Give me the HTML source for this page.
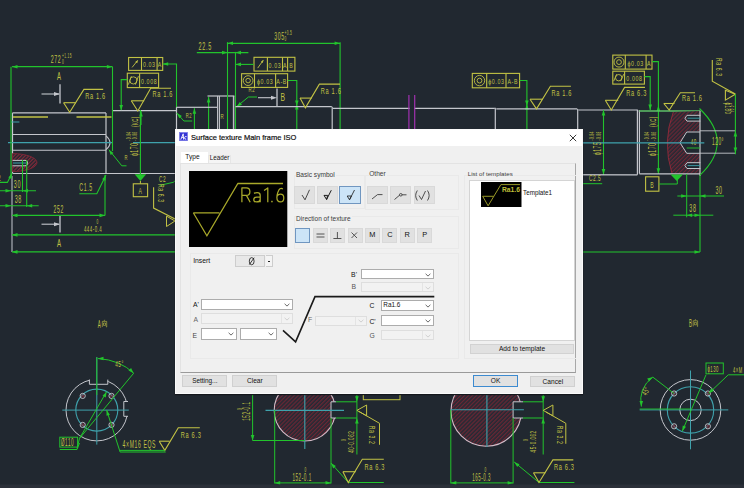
<!DOCTYPE html>
<html><head><meta charset="utf-8">
<style>
*{box-sizing:border-box}
html,body{margin:0;padding:0}
body{width:744px;height:488px;overflow:hidden;background:#212830;position:relative;font-family:"Liberation Sans",sans-serif}
#cad{position:absolute;left:0;top:0}
#cad text{font-family:"Liberation Sans",sans-serif;letter-spacing:0.12em}
.a{position:absolute}
.t{color:#111;white-space:nowrap}
</style></head><body>
<svg id="cad" width="744" height="488" viewBox="0 0 744 488">
<defs><pattern id="hatch2" patternUnits="userSpaceOnUse" width="2.6" height="3" patternTransform="rotate(45)"><rect width="2.6" height="3" fill="#212830"/><line x1="0.6" y1="0" x2="0.6" y2="3" stroke="#8c2a3c" stroke-width="1.1"/></pattern><pattern id="hatch" patternUnits="userSpaceOnUse" width="2.8" height="4" patternTransform="rotate(45)"><rect width="2.8" height="4" fill="#262a34"/><line x1="0.6" y1="0" x2="0.6" y2="4" stroke="#6c2634" stroke-width="1.2"/></pattern></defs>
<path d="M12.5 112.9 L106.0 112.9" stroke="#c4c6cc" stroke-width="1.2" fill="none" />
<path d="M12.5 112.9 L12.5 173.3" stroke="#c4c6cc" stroke-width="1.2" fill="none" />
<path d="M12.5 173.5 L176.5 173.5" stroke="#c4c6cc" stroke-width="1.2" fill="none" />
<path d="M106.0 112.9 L106.0 173.3" stroke="#c4c6cc" stroke-width="1.2" fill="none" />
<path d="M112.4 110.6 L176.5 110.6" stroke="#c4c6cc" stroke-width="1.2" fill="none" />
<path d="M12.5 134.5 L106.0 134.5" stroke="#c4c6cc" stroke-width="1.1" fill="none" />
<path d="M12.5 150.2 L106.0 150.2" stroke="#c4c6cc" stroke-width="1.1" fill="none" />
<path d="M106 135.8 Q114 142.7 106 149.6" stroke="#c4c6cc" stroke-width="1.1" fill="none"/>
<path d="M12.9 117.0 L48.0 117.0" stroke="#c2c244" stroke-width="1.3" fill="none" />
<path d="M76.5 117.0 L111.5 117.0" stroke="#c2c244" stroke-width="1.3" fill="none" />
<path d="M8.0 142.6 L113.0 142.6" stroke="#3fa2ac" stroke-width="1.3" fill="none" />
<path d="M133.0 142.6 L176.0 142.6" stroke="#3fa2ac" stroke-width="1.3" fill="none" />
<path d="M11.0 122.0 L19.4 122.0" stroke="#3fa2ac" stroke-width="1.0" fill="none" />
<path d="M12.5 153.6 A24.5 9 0 0 1 12.5 171.6 Z" stroke="#7a2636" stroke-width="1" fill="url(#hatch2)"/>
<path d="M12.5 160.4 L25 160.4 A2.7 2.7 0 0 1 25 165.8 L12.5 165.8" stroke="#c4c6cc" stroke-width="1" fill="#212830"/>
<path d="M13.0 163.0 L26.0 163.0" stroke="#3fa2ac" stroke-width="1.0" fill="none" />
<path d="M11.0 66.7 L11.0 176.0" stroke="#22c42c" stroke-width="1.1" fill="none" />
<path d="M12.0 176.0 L12.0 252.0" stroke="#b8bcc4" stroke-width="1.1" fill="none" />
<path d="M22.5 160.0 L22.5 192.0" stroke="#22c42c" stroke-width="1.1" fill="none" />
<path d="M26.7 160.0 L26.7 207.0" stroke="#22c42c" stroke-width="1.1" fill="none" />
<path d="M112.5 66.7 L112.5 151.0" stroke="#22c42c" stroke-width="1.1" fill="none" />
<path d="M12.0 66.7 L112.4 66.7" stroke="#22c42c" stroke-width="1.2" fill="none" />
<path d="M12.0 66.7 L17.5 64.9 L17.5 68.5Z" fill="#22c42c"/>
<path d="M112.4 66.7 L106.9 68.5 L106.9 64.9Z" fill="#22c42c"/>
<text transform="translate(50.7 63.0) scale(0.4705357142857142 1)" font-size="11.200000000000001" fill="#c2c244" text-anchor="start" >272</text>
<text transform="translate(62.0 57.5) scale(0.4705357142857142 1)" font-size="6.720000000000001" fill="#c2c244" text-anchor="start" >+1.15</text>
<text transform="translate(62.0 64.0) scale(0.4705357142857142 1)" font-size="6.720000000000001" fill="#c2c244" text-anchor="start" >0</text>
<text transform="translate(56.9 79.6) scale(0.5312499999999999 1)" font-size="11.200000000000001" fill="#c2c244" text-anchor="start" >A</text>
<path d="M41.5 94.0 L59.0 94.0" stroke="#c4c6cc" stroke-width="1.1" fill="none" />
<path d="M60.0 94.0 L54.0 96.0 L54.0 92.0Z" fill="#c4c6cc"/>
<path d="M60.0 84.2 L60.0 103.6" stroke="#c4c6cc" stroke-width="1.3" fill="none" />
<path d="M63.6 102.7 L75.6 102.7" stroke="#c2c244" stroke-width="1.1" fill="none" />
<path d="M63.6 102.7 L69.7 112.3 L83.9 89.4 L103.2 89.4" stroke="#c2c244" stroke-width="1.1" fill="none" />
<text transform="translate(85.2 99.4) scale(0.6450892857142856 1)" font-size="8.736" fill="#c2c244" text-anchor="start" >Ra 1.6</text>
<rect x="128.6" y="57.5" width="34.1" height="12.9" stroke="#c2c244" stroke-width="1.1" fill="none"/>
<path d="M141.5 57.5 L141.5 70.4" stroke="#c2c244" stroke-width="1.1" fill="none" />
<path d="M157.1 57.5 L157.1 70.4" stroke="#c2c244" stroke-width="1.1" fill="none" />
<path d="M132.1 67.4 L137.6 60.5" stroke="#c2c244" stroke-width="0.9" fill="none" />
<path d="M137.9 60.0 L137.3 63.2 L135.2 61.9Z" fill="#c2c244"/>
<text transform="translate(149.3 66.8) scale(0.6526785714285713 1)" font-size="8.064000000000002" fill="#c2c244" text-anchor="middle" >0.03</text>
<text transform="translate(159.9 66.8) scale(0.6526785714285713 1)" font-size="8.064000000000002" fill="#c2c244" text-anchor="middle" >A</text>
<rect x="127.3" y="73.2" width="31.3" height="14.4" stroke="#c2c244" stroke-width="1.1" fill="none"/>
<path d="M139.6 73.2 L139.6 87.6" stroke="#c2c244" stroke-width="1.1" fill="none" />
<circle cx="133.4" cy="80.4" r="3.6" stroke="#c2c244" stroke-width="0.9" fill="none"/>
<path d="M128.4 84.6 L131.4 76.2" stroke="#c2c244" stroke-width="0.9" fill="none" />
<path d="M135.4 84.6 L138.4 76.2" stroke="#c2c244" stroke-width="0.9" fill="none" />
<text transform="translate(149.1 84.0) scale(0.6526785714285713 1)" font-size="8.064000000000002" fill="#c2c244" text-anchor="middle" >0.008</text>
<path d="M162.7 64.0 L176.5 64.0 L176.5 110.0" stroke="#22c42c" stroke-width="1.1" fill="none" />
<path d="M162.7 64.0 L168.2 62.2 L168.2 65.8Z" fill="#22c42c"/>
<path d="M127.3 79.6 L121.2 79.6 L121.2 110.0" stroke="#22c42c" stroke-width="1.1" fill="none" />
<path d="M121.2 110.5 L119.4 105.0 L123.0 105.0Z" fill="#22c42c"/>
<path d="M131.3 100.8 L144.2 100.8" stroke="#c2c244" stroke-width="1.1" fill="none" />
<path d="M131.3 100.8 L137.8 111.0 L150.7 88.3 L171.0 88.3" stroke="#c2c244" stroke-width="1.1" fill="none" />
<text transform="translate(152.5 97.1) scale(0.6450892857142856 1)" font-size="8.736" fill="#c2c244" text-anchor="start" >Ra 1.6</text>
<path d="M176.5 107.3 L176.5 176.0" stroke="#c4c6cc" stroke-width="1.2" fill="none" />
<path d="M176.5 107.3 L200.0 107.3" stroke="#c4c6cc" stroke-width="1.2" fill="none" />
<path d="M141.0 111.0 L141.0 125.0" stroke="#22c42c" stroke-width="1.1" fill="none" />
<path d="M141.0 111.0 L142.8 116.5 L139.2 116.5Z" fill="#22c42c"/>
<path d="M176.5 112.8 L183.9 121.0 L192.2 121.0" stroke="#22c42c" stroke-width="1.0" fill="none" />
<path d="M177.0 113.0 L181.9 116.0 L179.2 118.3Z" fill="#22c42c"/>
<text transform="translate(185.7 117.5) scale(0.5312499999999999 1)" font-size="7.840000000000001" fill="#c2c244" text-anchor="start" >R2</text>
<path d="M194.4 108.2 L194.4 129.0" stroke="#22c42c" stroke-width="1.1" fill="none" />
<path d="M194.4 108.2 L196.2 113.7 L192.6 113.7Z" fill="#22c42c"/>
<path d="M208.6 97.1 L208.6 129.0" stroke="#22c42c" stroke-width="1.1" fill="none" />
<path d="M208.6 97.1 L210.4 102.6 L206.8 102.6Z" fill="#22c42c"/>
<path d="M200.0 107.3 L217.0 107.3" stroke="#c4c6cc" stroke-width="1.2" fill="none" />
<path d="M207.5 96.0 L234.4 96.0" stroke="#c4c6cc" stroke-width="1.2" fill="none" />
<path d="M217.6 96.0 L217.6 129.0" stroke="#c4c6cc" stroke-width="1.1" fill="none" />
<path d="M219.4 96.0 L219.4 129.0" stroke="#c4c6cc" stroke-width="1.1" fill="none" />
<path d="M233.4 96.0 L233.4 129.0" stroke="#c4c6cc" stroke-width="1.1" fill="none" />
<path d="M235.2 96.0 L235.2 129.0" stroke="#c4c6cc" stroke-width="1.1" fill="none" />
<text transform="translate(220.4 119.0) scale(0.5691964285714285 1)" font-size="7.840000000000001" fill="#c2c244" text-anchor="start" >R</text>
<path d="M196.8 52.6 L248.4 52.6" stroke="#22c42c" stroke-width="1.1" fill="none" />
<path d="M227.5 52.6 L222.0 54.4 L222.0 50.8Z" fill="#22c42c"/>
<path d="M235.5 52.6 L241.0 50.8 L241.0 54.4Z" fill="#22c42c"/>
<text transform="translate(198.6 50.2) scale(0.5464285714285714 1)" font-size="10.080000000000002" fill="#c2c244" text-anchor="start" >22.5</text>
<path d="M226.9 43.3 L340.1 43.3" stroke="#22c42c" stroke-width="1.2" fill="none" />
<path d="M227.5 43.3 L233.0 41.5 L233.0 45.1Z" fill="#22c42c"/>
<path d="M340.1 43.3 L334.6 45.1 L334.6 41.5Z" fill="#22c42c"/>
<path d="M227.5 42.2 L227.5 129.0" stroke="#22c42c" stroke-width="1.1" fill="none" />
<path d="M235.5 51.9 L235.5 129.0" stroke="#22c42c" stroke-width="1.1" fill="none" />
<path d="M340.1 42.2 L340.1 129.0" stroke="#22c42c" stroke-width="1.1" fill="none" />
<text transform="translate(274.2 40.0) scale(0.48571428571428565 1)" font-size="10.64" fill="#c2c244" text-anchor="start" >305</text>
<text transform="translate(284.5 35.0) scale(0.4705357142857142 1)" font-size="6.720000000000001" fill="#c2c244" text-anchor="start" >+0.5</text>
<text transform="translate(284.5 41.0) scale(0.4705357142857142 1)" font-size="6.720000000000001" fill="#c2c244" text-anchor="start" >0</text>
<rect x="254.0" y="57.3" width="40.9" height="13.8" stroke="#c2c244" stroke-width="1.1" fill="none"/>
<path d="M267.4 57.3 L267.4 71.1" stroke="#c2c244" stroke-width="1.1" fill="none" />
<path d="M282.5 57.3 L282.5 71.1" stroke="#c2c244" stroke-width="1.1" fill="none" />
<path d="M287.6 57.3 L287.6 71.1" stroke="#c2c244" stroke-width="1.1" fill="none" />
<path d="M257.7 68.1 L263.2 60.3" stroke="#c2c244" stroke-width="0.9" fill="none" />
<path d="M263.5 59.8 L262.9 63.0 L260.9 61.7Z" fill="#c2c244"/>
<text transform="translate(274.9 67.5) scale(0.6526785714285713 1)" font-size="8.064000000000002" fill="#c2c244" text-anchor="middle" >0.03</text>
<text transform="translate(285.1 67.5) scale(0.6526785714285713 1)" font-size="8.064000000000002" fill="#c2c244" text-anchor="middle" >A</text>
<text transform="translate(291.2 67.5) scale(0.6526785714285713 1)" font-size="8.064000000000002" fill="#c2c244" text-anchor="middle" >B</text>
<rect x="241.6" y="73.7" width="46.0" height="13.7" stroke="#c2c244" stroke-width="1.1" fill="none"/>
<path d="M254.5 73.7 L254.5 87.4" stroke="#c2c244" stroke-width="1.1" fill="none" />
<path d="M275.6 73.7 L275.6 87.4" stroke="#c2c244" stroke-width="1.1" fill="none" />
<circle cx="248.1" cy="80.6" r="4.9" stroke="#c2c244" stroke-width="0.9" fill="none"/>
<circle cx="248.1" cy="80.6" r="2.3" stroke="#c2c244" stroke-width="0.9" fill="none"/>
<text transform="translate(265.1 83.8) scale(0.6526785714285713 1)" font-size="8.064000000000002" fill="#c2c244" text-anchor="middle" >&#981;0.03</text>
<text transform="translate(281.6 83.8) scale(0.6526785714285713 1)" font-size="8.064000000000002" fill="#c2c244" text-anchor="middle" >A-B</text>
<path d="M253.8 64.4 L235.5 64.4" stroke="#22c42c" stroke-width="1.1" fill="none" />
<path d="M235.5 64.4 L241.0 62.6 L241.0 66.2Z" fill="#22c42c"/>
<path d="M287.6 80.5 L296.8 80.5 L296.8 129.0" stroke="#22c42c" stroke-width="1.1" fill="none" />
<path d="M296.8 104.0 L298.6 109.5 L295.0 109.5Z" fill="#22c42c"/>
<path d="M296.8 106.0 L295.0 100.5 L298.6 100.5Z" fill="#22c42c"/>
<text transform="translate(248.4 92.0) scale(0.5691964285714285 1)" font-size="7.840000000000001" fill="#c2c244" text-anchor="start" >R2</text>
<path d="M257.0 97.0 L248.4 97.0 L236.6 106.7" stroke="#22c42c" stroke-width="1.0" fill="none" />
<path d="M236.6 106.7 L239.8 101.9 L242.0 104.7Z" fill="#22c42c"/>
<path d="M258.0 97.7 L272.0 97.7" stroke="#c4c6cc" stroke-width="1.1" fill="none" />
<path d="M277.0 97.7 L271.0 99.7 L271.0 95.7Z" fill="#c4c6cc"/>
<path d="M277.0 88.4 L277.0 106.7" stroke="#c4c6cc" stroke-width="1.3" fill="none" />
<text transform="translate(280.6 101.3) scale(0.6071428571428571 1)" font-size="11.200000000000001" fill="#c2c244" text-anchor="start" >B</text>
<path d="M235.5 106.7 L331.8 106.7" stroke="#c4c6cc" stroke-width="1.2" fill="none" />
<path d="M332.2 106.7 L332.2 129.0" stroke="#c4c6cc" stroke-width="1.2" fill="none" />
<path d="M300.0 98.1 L311.8 98.1" stroke="#c2c244" stroke-width="1.1" fill="none" />
<path d="M300.0 98.1 L305.4 107.8 L319.4 84.1 L340.0 84.1" stroke="#c2c244" stroke-width="1.1" fill="none" />
<text transform="translate(320.8 93.8) scale(0.6450892857142856 1)" font-size="8.736" fill="#c2c244" text-anchor="start" >Ra 1.6</text>
<path d="M332.6 108.4 L494.8 108.4" stroke="#c4c6cc" stroke-width="1.2" fill="none" />
<rect x="409.6" y="106.5" width="4.4" height="3.5" stroke="#212830" stroke-width="0" fill="#212830"/>
<path d="M408.9 95.0 L408.9 129.0" stroke="#a030b0" stroke-width="1.2" fill="none" />
<path d="M414.7 95.0 L414.7 129.0" stroke="#a030b0" stroke-width="1.2" fill="none" />
<path d="M495.3 107.8 L495.3 129.0" stroke="#c4c6cc" stroke-width="1.2" fill="none" />
<rect x="472.3" y="73.4" width="47.3" height="14.4" stroke="#c2c244" stroke-width="1.1" fill="none"/>
<path d="M486.7 73.4 L486.7 87.8" stroke="#c2c244" stroke-width="1.1" fill="none" />
<path d="M506.0 73.4 L506.0 87.8" stroke="#c2c244" stroke-width="1.1" fill="none" />
<circle cx="479.5" cy="80.6" r="5.2" stroke="#c2c244" stroke-width="0.9" fill="none"/>
<circle cx="479.5" cy="80.6" r="2.4" stroke="#c2c244" stroke-width="0.9" fill="none"/>
<text transform="translate(496.4 84.2) scale(0.6526785714285713 1)" font-size="8.064000000000002" fill="#c2c244" text-anchor="middle" >&#981;0.03</text>
<text transform="translate(512.8 84.2) scale(0.6526785714285713 1)" font-size="8.064000000000002" fill="#c2c244" text-anchor="middle" >A-B</text>
<path d="M519.6 80.5 L526.9 80.5 L526.9 129.0" stroke="#22c42c" stroke-width="1.1" fill="none" />
<path d="M526.9 104.0 L528.7 109.5 L525.1 109.5Z" fill="#22c42c"/>
<path d="M526.9 106.0 L525.1 100.5 L528.7 100.5Z" fill="#22c42c"/>
<path d="M496.3 108.9 L577.3 108.9" stroke="#c4c6cc" stroke-width="1.2" fill="none" />
<path d="M530.0 99.2 L542.5 99.2" stroke="#c2c244" stroke-width="1.1" fill="none" />
<path d="M530.0 99.2 L536.5 108.9 L550.4 86.3 L570.9 86.3" stroke="#c2c244" stroke-width="1.1" fill="none" />
<text transform="translate(551.5 96.0) scale(0.6450892857142856 1)" font-size="8.736" fill="#c2c244" text-anchor="start" >Ra 1.6</text>
<path d="M577.7 108.9 L577.7 129.0" stroke="#c4c6cc" stroke-width="1.2" fill="none" />
<path d="M578.4 110.0 L637.5 110.0" stroke="#c4c6cc" stroke-width="1.2" fill="none" />
<path d="M603.5 110.0 L603.5 175.0" stroke="#22c42c" stroke-width="1.1" fill="none" />
<path d="M603.5 110.0 L605.3 115.5 L601.7 115.5Z" fill="#22c42c"/>
<path d="M603.5 174.5 L601.7 169.0 L605.3 169.0Z" fill="#22c42c"/>
<path d="M605.3 100.3 L618.2 100.3" stroke="#c2c244" stroke-width="1.1" fill="none" />
<path d="M605.3 100.3 L611.3 110.0 L624.6 87.4 L645.0 87.4" stroke="#c2c244" stroke-width="1.1" fill="none" />
<text transform="translate(626.3 96.0) scale(0.6450892857142856 1)" font-size="8.736" fill="#c2c244" text-anchor="start" >Ra 6.3</text>
<rect x="612.8" y="55.1" width="39.2" height="14.0" stroke="#c2c244" stroke-width="1.1" fill="none"/>
<path d="M625.3 55.1 L625.3 69.1" stroke="#c2c244" stroke-width="1.1" fill="none" />
<path d="M646.1 55.1 L646.1 69.1" stroke="#c2c244" stroke-width="1.1" fill="none" />
<circle cx="619.0" cy="62.1" r="5.0" stroke="#c2c244" stroke-width="0.9" fill="none"/>
<circle cx="619.0" cy="62.1" r="2.4" stroke="#c2c244" stroke-width="0.9" fill="none"/>
<text transform="translate(635.7 65.5) scale(0.6526785714285713 1)" font-size="8.064000000000002" fill="#c2c244" text-anchor="middle" >&#981;0.03</text>
<text transform="translate(649.0 65.5) scale(0.6526785714285713 1)" font-size="8.064000000000002" fill="#c2c244" text-anchor="middle" >A</text>
<rect x="612.8" y="71.2" width="31.6" height="12.9" stroke="#c2c244" stroke-width="1.1" fill="none"/>
<path d="M624.6 71.2 L624.6 84.1" stroke="#c2c244" stroke-width="1.1" fill="none" />
<circle cx="618.7" cy="77.7" r="3.2" stroke="#c2c244" stroke-width="0.9" fill="none"/>
<path d="M613.7 81.1 L616.7 74.2" stroke="#c2c244" stroke-width="0.9" fill="none" />
<path d="M620.7 81.1 L623.7 74.2" stroke="#c2c244" stroke-width="0.9" fill="none" />
<text transform="translate(634.5 80.5) scale(0.6526785714285713 1)" font-size="8.064000000000002" fill="#c2c244" text-anchor="middle" >0.008</text>
<path d="M652.0 61.6 L658.4 61.6 L658.4 174.0" stroke="#22c42c" stroke-width="1.1" fill="none" />
<path d="M658.4 105.6 L660.2 111.1 L656.6 111.1Z" fill="#22c42c"/>
<path d="M658.4 173.8 L656.6 168.3 L660.2 168.3Z" fill="#22c42c"/>
<path d="M644.4 76.6 L650.2 76.6 L650.2 110.0" stroke="#22c42c" stroke-width="1.1" fill="none" />
<path d="M650.2 110.0 L648.4 104.5 L652.0 104.5Z" fill="#22c42c"/>
<path d="M637.4 109.8 L637.4 174.8" stroke="#c4c6cc" stroke-width="1.2" fill="none" />
<path d="M639.4 110.2 L639.4 173.8" stroke="#c4c6cc" stroke-width="1.2" fill="none" />
<path d="M638.6 111.0 L700.3 111.0" stroke="#c4c6cc" stroke-width="1.2" fill="none" />
<path d="M639.4 111.0 L700.0 111.0" stroke="#22c42c" stroke-width="0.9" fill="none" />
<path d="M663.8 103.5 L674.5 103.5" stroke="#c2c244" stroke-width="1.1" fill="none" />
<path d="M663.8 103.5 L669.2 110.0 L680.3 92.7 L695.0 92.7" stroke="#c2c244" stroke-width="1.1" fill="none" />
<text transform="translate(682.0 100.7) scale(0.6450892857142856 1)" font-size="8.736" fill="#c2c244" text-anchor="start" >Ra 1.6</text>
<path d="M673.3 112 Q662 142 672 173.5 L700 173.5 L700 169 L686.7 169 L686.7 163 L700 163 L700 154 L686.7 153.3 L680 142.7 L686.7 132 L700 131 L700 121.3 L686.7 121.3 L686.7 114.7 L700 114.7 L700 111 Z" fill="url(#hatch)" stroke="none"/>
<path d="M673.3 112 Q662 142 672 173.5" stroke="#8a2a3a" stroke-width="1" fill="none"/>
<path d="M700.0 110.7 L700.0 176.0" stroke="#c4c6cc" stroke-width="1.2" fill="none" />
<path d="M700.4 115.3 L687.0 115.3 L684.9 118.2 L687.0 121.1 L700.4 121.1" stroke="#c4c6cc" stroke-width="1.0" fill="none" />
<path d="M687.5 118.2 L700.0 118.2" stroke="#3fa2ac" stroke-width="0.9" fill="none" />
<path d="M700.4 162.7 L687.0 162.7 L684.9 165.6 L687.0 168.5 L700.4 168.5" stroke="#c4c6cc" stroke-width="1.0" fill="none" />
<path d="M687.5 165.6 L700.0 165.6" stroke="#3fa2ac" stroke-width="0.9" fill="none" />
<path d="M700.0 132.0 L686.7 132.0 L680.0 142.7 L686.7 153.3 L700.0 153.3" stroke="#c4c6cc" stroke-width="1.0" fill="none" />
<path d="M699.5 108.5 Q735 142.5 699.5 175.6" stroke="#22c42c" stroke-width="1.1" fill="none"/>
<text transform="translate(712.0 145.3) scale(0.4705357142857142 1)" font-size="10.080000000000002" fill="#c2c244" text-anchor="start" >120&#176;</text>
<text transform="translate(690.7 145.3) scale(0.5008928571428571 1)" font-size="8.96" fill="#c2c244" text-anchor="start" >40</text>
<path d="M686.7 148.0 L700.0 148.0" stroke="#22c42c" stroke-width="0.9" fill="none" />
<path d="M700.0 130.8 L735.4 130.8" stroke="#c4c6cc" stroke-width="0.9" fill="none" />
<path d="M700.0 153.2 L735.4 153.2" stroke="#c4c6cc" stroke-width="0.9" fill="none" />
<path d="M735.4 131.0 L737.2 136.5 L733.6 136.5Z" fill="#22c42c"/>
<path d="M735.4 153.0 L733.6 147.5 L737.2 147.5Z" fill="#22c42c"/>
<path d="M712.3 59.9 L712.3 81.2 L735.3 94.0" stroke="#c2c244" stroke-width="1.1" fill="none" />
<path d="M735.3 94.3 L725.4 90.2 L725.4 100.1 L735.3 94.3" stroke="#c2c244" stroke-width="1.1" fill="none" />
<text transform="translate(716.0 58.0) rotate(90) scale(0.6071428571428571 1)" font-size="8.4" fill="#c2c244" text-anchor="start" >Ra 6.3</text>
<path d="M735.4 94.3 L735.4 154.2" stroke="#22c42c" stroke-width="1.1" fill="none" />
<text transform="translate(725.0 102.5) rotate(90) scale(0.5008928571428571 1)" font-size="8.96" fill="#c2c244" text-anchor="start" >&#981;180</text>
<text transform="translate(730.0 104.0) rotate(90) scale(0.4705357142857142 1)" font-size="5.6000000000000005" fill="#c2c244" text-anchor="start" >+0.04</text>
<path d="M176.5 174.3 L637.4 174.8" stroke="#c4c6cc" stroke-width="1.2" fill="none" />
<path d="M639.4 173.8 L700.0 173.8" stroke="#c4c6cc" stroke-width="1.2" fill="none" />
<path d="M582.0 142.8 L704.3 142.8" stroke="#3fa2ac" stroke-width="1.3" fill="none" />
<text transform="translate(138.0 156.1) rotate(-90) scale(0.45535714285714285 1)" font-size="11.200000000000001" fill="#c2c244" text-anchor="start" >&#981;170</text>
<text transform="translate(130.8 140.7) rotate(-90) scale(0.4705357142857142 1)" font-size="6.720000000000001" fill="#c2c244" text-anchor="start" >-0.04</text>
<text transform="translate(137.3 140.7) rotate(-90) scale(0.4705357142857142 1)" font-size="6.720000000000001" fill="#c2c244" text-anchor="start" >-0.08</text>
<text transform="translate(137.8 127.0) rotate(-90) scale(0.4705357142857142 1)" font-size="8.96" fill="#c2c244" text-anchor="start" >(KC)</text>
<text transform="translate(601.0 155.3) rotate(-90) scale(0.45535714285714285 1)" font-size="11.200000000000001" fill="#c2c244" text-anchor="start" >&#981;175</text>
<text transform="translate(594.3 140.5) rotate(-90) scale(0.4705357142857142 1)" font-size="6.720000000000001" fill="#c2c244" text-anchor="start" >-0.04</text>
<text transform="translate(600.5 140.5) rotate(-90) scale(0.4705357142857142 1)" font-size="6.720000000000001" fill="#c2c244" text-anchor="start" >-0.08</text>
<text transform="translate(656.3 156.2) rotate(-90) scale(0.45535714285714285 1)" font-size="11.200000000000001" fill="#c2c244" text-anchor="start" >&#981;170</text>
<text transform="translate(649.3 140.7) rotate(-90) scale(0.4705357142857142 1)" font-size="6.720000000000001" fill="#c2c244" text-anchor="start" >-0.04</text>
<text transform="translate(655.5 140.7) rotate(-90) scale(0.4705357142857142 1)" font-size="6.720000000000001" fill="#c2c244" text-anchor="start" >-0.08</text>
<text transform="translate(656.0 127.0) rotate(-90) scale(0.4705357142857142 1)" font-size="8.96" fill="#c2c244" text-anchor="start" >(KC)</text>
<path d="M140.4 110.0 L140.4 176.6" stroke="#22c42c" stroke-width="1.1" fill="none" />
<path d="M134.7 174.3 L146.2 174.3 L140.4 181 Z" fill="#22c42c"/>
<path d="M140.4 181.0 L140.4 183.8" stroke="#c2c244" stroke-width="1.0" fill="none" />
<rect x="133.3" y="183.8" width="14.3" height="12.9" stroke="#c2c244" stroke-width="1.1" fill="none"/>
<text transform="translate(140.4 193.5) scale(0.5691964285714285 1)" font-size="8.96" fill="#c2c244" text-anchor="middle" >A</text>
<text transform="translate(159.0 181.5) scale(0.5312499999999999 1)" font-size="8.96" fill="#c2c244" text-anchor="start" >C2</text>
<path d="M159.7 185.4 L173.3 182.3 L176.0 180.0" stroke="#22c42c" stroke-width="1.0" fill="none" />
<path d="M153.6 187.2 L153.6 208.1 L175.1 219.1" stroke="#c2c244" stroke-width="1.1" fill="none" />
<path d="M175.0 221.0 L166.5 216.1 L166.5 226.5 L175.0 221.0" stroke="#c2c244" stroke-width="1.0" fill="none" />
<text transform="translate(157.8 184.0) rotate(90) scale(0.6071428571428571 1)" font-size="8.4" fill="#c2c244" text-anchor="start" >Ra 6.3</text>
<path d="M108.8 149.6 L121.8 165.8 L126.5 165.8" stroke="#22c42c" stroke-width="1.0" fill="none" />
<path d="M108.8 149.6 L113.5 152.9 L110.7 155.1Z" fill="#22c42c"/>
<text transform="translate(124.5 160.0) scale(0.5312499999999999 1)" font-size="7.840000000000001" fill="#c2c244" text-anchor="start" >R</text>
<path d="M79.3 193.8 L96.8 193.8 L106.0 175.0" stroke="#22c42c" stroke-width="1.1" fill="none" />
<path d="M106.0 175.0 L105.4 180.8 L102.1 179.3Z" fill="#22c42c"/>
<text transform="translate(79.3 190.9) scale(0.5008928571428571 1)" font-size="10.416000000000002" fill="#c2c244" text-anchor="start" >C1.5</text>
<path d="M0.0 182.4 L7.4 182.4 L12.0 173.2" stroke="#22c42c" stroke-width="1.1" fill="none" />
<path d="M12.0 173.2 L11.6 179.0 L8.3 177.6Z" fill="#22c42c"/>
<text transform="translate(-6.0 180.5) scale(0.5312499999999999 1)" font-size="8.96" fill="#c2c244" text-anchor="start" >R2</text>
<path d="M0.0 190.7 L36.0 190.7" stroke="#22c42c" stroke-width="1.1" fill="none" />
<path d="M11.0 190.7 L5.5 192.5 L5.5 188.9Z" fill="#22c42c"/>
<path d="M22.5 190.7 L28.0 188.9 L28.0 192.5Z" fill="#22c42c"/>
<text transform="translate(13.8 188.3) scale(0.5312499999999999 1)" font-size="10.080000000000002" fill="#c2c244" text-anchor="start" >30</text>
<path d="M0.0 205.8 L38.7 205.8" stroke="#22c42c" stroke-width="1.1" fill="none" />
<path d="M11.0 205.8 L5.5 207.6 L5.5 204.0Z" fill="#22c42c"/>
<path d="M26.7 205.8 L32.2 204.0 L32.2 207.6Z" fill="#22c42c"/>
<text transform="translate(14.7 203.3) scale(0.5312499999999999 1)" font-size="10.080000000000002" fill="#c2c244" text-anchor="start" >38</text>
<path d="M12.0 215.4 L105.0 215.4" stroke="#22c42c" stroke-width="1.1" fill="none" />
<path d="M12.0 215.4 L17.5 213.6 L17.5 217.2Z" fill="#22c42c"/>
<path d="M105.0 215.4 L99.5 217.2 L99.5 213.6Z" fill="#22c42c"/>
<path d="M105.0 175.0 L105.0 215.4" stroke="#22c42c" stroke-width="1.1" fill="none" />
<text transform="translate(53.5 213.2) scale(0.45535714285714285 1)" font-size="11.200000000000001" fill="#c2c244" text-anchor="start" >252</text>
<path d="M41.5 224.2 L59.0 224.2" stroke="#c4c6cc" stroke-width="1.1" fill="none" />
<path d="M60.0 224.2 L54.0 226.2 L54.0 222.2Z" fill="#c4c6cc"/>
<path d="M60.0 216.0 L60.0 232.5" stroke="#c4c6cc" stroke-width="1.3" fill="none" />
<path d="M12.0 234.9 L176.0 234.9" stroke="#22c42c" stroke-width="1.2" fill="none" />
<path d="M12.0 234.9 L17.5 233.1 L17.5 236.7Z" fill="#22c42c"/>
<text transform="translate(83.9 231.8) scale(0.45535714285714285 1)" font-size="9.520000000000001" fill="#c2c244" text-anchor="start" >444-0.4</text>
<text transform="translate(96.5 223.5) scale(0.4705357142857142 1)" font-size="6.720000000000001" fill="#c2c244" text-anchor="start" >0</text>
<text transform="translate(57.1 246.7) scale(0.5160714285714285 1)" font-size="11.760000000000002" fill="#c2c244" text-anchor="start" >A</text>
<path d="M12.0 251.9 L176.0 251.9" stroke="#22c42c" stroke-width="1.2" fill="none" />
<path d="M12.0 251.9 L17.5 250.1 L17.5 253.7Z" fill="#22c42c"/>
<path d="M670.5 174.5 L683 174.5 L676.8 181 Z" fill="#22c42c"/>
<rect x="645.6" y="176.8" width="13.3" height="14.4" stroke="#c2c244" stroke-width="1.1" fill="none"/>
<text transform="translate(652.2 188.0) scale(0.5691964285714285 1)" font-size="8.96" fill="#c2c244" text-anchor="middle" >B</text>
<path d="M658.9 184.0 L677.3 184.0 L677.3 179.0" stroke="#22c42c" stroke-width="1.0" fill="none" />
<text transform="translate(589.0 181.4) scale(0.5008928571428571 1)" font-size="9.520000000000001" fill="#c2c244" text-anchor="start" >C2.5</text>
<path d="M582.6 183.7 L602.2 183.7" stroke="#22c42c" stroke-width="1.0" fill="none" />
<path d="M686.7 174.0 L686.7 217.3" stroke="#22c42c" stroke-width="1.0" fill="none" />
<path d="M700.0 176.0 L700.0 252.0" stroke="#22c42c" stroke-width="1.1" fill="none" />
<path d="M677.3 196.0 L724.0 196.0" stroke="#22c42c" stroke-width="1.0" fill="none" />
<path d="M686.7 196.0 L681.2 197.8 L681.2 194.2Z" fill="#22c42c"/>
<path d="M700.0 196.0 L705.5 194.2 L705.5 197.8Z" fill="#22c42c"/>
<text transform="translate(715.4 193.5) scale(0.5312499999999999 1)" font-size="10.080000000000002" fill="#c2c244" text-anchor="start" >30</text>
<path d="M673.3 215.2 L713.3 215.2" stroke="#22c42c" stroke-width="1.0" fill="none" />
<path d="M686.7 215.2 L692.2 213.4 L692.2 217.0Z" fill="#22c42c"/>
<path d="M700.0 215.2 L694.5 217.0 L694.5 213.4Z" fill="#22c42c"/>
<text transform="translate(689.3 212.0) scale(0.5312499999999999 1)" font-size="10.080000000000002" fill="#c2c244" text-anchor="start" >38</text>
<path d="M582.0 252.0 L700.0 252.0" stroke="#22c42c" stroke-width="1.1" fill="none" />
<path d="M700.0 252.0 L694.5 253.8 L694.5 250.2Z" fill="#22c42c"/>
<path d="M582.0 234.9 L744.0 234.9" stroke="#22c42c" stroke-width="0" fill="none" />
<text transform="translate(97.8 327.6) scale(0.44017857142857136 1)" font-size="10.080000000000002" fill="#c2c244" text-anchor="start" >A</text>
<path d="M104.6 319.8 L104.1 321.1 M102.3 327.0 V321.4 H106.7 V327.0 L105.9 326.6 M103.5 323.0 H105.5 V325.4 H103.5 Z" stroke="#c2c244" stroke-width="0.6" fill="none"/>
<circle cx="96.8" cy="410.1" r="30.8" stroke="#c4c6cc" stroke-width="1.0" fill="none"/>
<rect x="89.6" y="378.0" width="18.0" height="6.3" stroke="#212830" stroke-width="0" fill="#212830"/>
<path d="M89.4 379.6 L89.4 384.3 L107.8 384.3 L107.8 379.6" stroke="#c4c6cc" stroke-width="1.0" fill="none" />
<rect x="124.3" y="401.7" width="4.7" height="14.4" stroke="#212830" stroke-width="0" fill="#212830"/>
<path d="M128.0 401.5 L123.8 401.5 L123.8 416.3 L128.0 416.3" stroke="#c4c6cc" stroke-width="1.0" fill="none" />
<circle cx="96.8" cy="410.1" r="21.0" stroke="#3fa2ac" stroke-width="1.1" fill="none"/>
<path d="M62.3 410.1 L128.8 410.1" stroke="#3fa2ac" stroke-width="1.0" fill="none" />
<path d="M96.8 357.2 L96.8 444.6" stroke="#3fa2ac" stroke-width="1.0" fill="none" />
<path d="M96.8 357.2 L96.8 395.0" stroke="#22c42c" stroke-width="1.0" fill="none" />
<circle cx="82.7" cy="395.9" r="2.6" stroke="#c4c6cc" stroke-width="0.9" fill="none"/>
<circle cx="82.7" cy="395.9" r="1.1" stroke="#8a2a3a" stroke-width="0.9" fill="none"/>
<circle cx="111.5" cy="395.9" r="2.6" stroke="#c4c6cc" stroke-width="0.9" fill="none"/>
<circle cx="111.5" cy="395.9" r="1.1" stroke="#8a2a3a" stroke-width="0.9" fill="none"/>
<circle cx="82.7" cy="424.9" r="2.6" stroke="#c4c6cc" stroke-width="0.9" fill="none"/>
<circle cx="82.7" cy="424.9" r="1.1" stroke="#8a2a3a" stroke-width="0.9" fill="none"/>
<circle cx="111.5" cy="424.9" r="2.6" stroke="#c4c6cc" stroke-width="0.9" fill="none"/>
<circle cx="111.5" cy="424.9" r="1.1" stroke="#8a2a3a" stroke-width="0.9" fill="none"/>
<path d="M98 358.5 Q120 360 133.7 373.2" stroke="#22c42c" stroke-width="1" fill="none"/>
<path d="M98.0 358.5 L103.5 356.7 L103.5 360.3Z" fill="#22c42c"/>
<path d="M133.7 373.2 L128.5 370.6 L131.1 368.0Z" fill="#22c42c"/>
<text transform="translate(115.2 367.0) scale(0.5160714285714285 1)" font-size="8.96" fill="#c2c244" text-anchor="start" >45&#176;</text>
<path d="M133.7 373.2 L79.5 438.4" stroke="#22c42c" stroke-width="1.0" fill="none" />
<path d="M77.0 448.3 L79.5 438.4 L106.6 391.7" stroke="#22c42c" stroke-width="1.0" fill="none" />
<path d="M106.6 391.7 L105.8 397.4 L102.5 395.8Z" fill="#22c42c"/>
<rect x="59.8" y="437.2" width="17.8" height="9.9" stroke="#22c42c" stroke-width="1.0" fill="none"/>
<text transform="translate(61.0 446.0) scale(0.45535714285714285 1)" font-size="10.080000000000002" fill="#c2c244" text-anchor="start" >&#216;110</text>
<path d="M59.8 449.5 L77.0 449.5 L79.5 443.0" stroke="#22c42c" stroke-width="1.0" fill="none" />
<path d="M106.6 410.0 L120.1 452.0 L165.7 452.0" stroke="#22c42c" stroke-width="1.0" fill="none" />
<path d="M106.6 410.0 L109.9 414.8 L106.5 415.8Z" fill="#22c42c"/>
<text transform="translate(122.6 448.3) scale(0.45535714285714285 1)" font-size="11.200000000000001" fill="#c2c244" text-anchor="start" >4&#215;M16 EQS</text>
<path d="M159.2 441.2 L169.7 441.2" stroke="#c2c244" stroke-width="1.1" fill="none" />
<path d="M159.2 441.2 L164.8 450.4 L178.3 427.7 L199.8 427.7" stroke="#c2c244" stroke-width="1.1" fill="none" />
<text transform="translate(180.8 437.8) scale(0.6450892857142856 1)" font-size="8.736" fill="#c2c244" text-anchor="start" >Ra 6.3</text>
<path d="M120.0 450.4 L164.8 450.4" stroke="#22c42c" stroke-width="1.0" fill="none" />
<text transform="translate(688.9 326.5) scale(0.44017857142857136 1)" font-size="10.080000000000002" fill="#c2c244" text-anchor="start" >B</text>
<path d="M695.5 319.2 L695.0 320.5 M693.2 326.4 V320.8 H697.6 V326.4 L696.8 326.0 M694.4 322.4 H696.4 V324.8 H694.4 Z" stroke="#c2c244" stroke-width="0.6" fill="none"/>
<circle cx="690.5" cy="409.9" r="30.3" stroke="#c4c6cc" stroke-width="1.0" fill="none"/>
<circle cx="690.5" cy="409.9" r="23.2" stroke="#3fa2ac" stroke-width="1.1" fill="none"/>
<circle cx="690.5" cy="409.9" r="10.7" stroke="#c4c6cc" stroke-width="1.0" fill="none"/>
<path d="M639.7 409.9 L728.3 409.9" stroke="#3fa2ac" stroke-width="1.0" fill="none" />
<path d="M690.5 370.5 L690.5 449.3" stroke="#3fa2ac" stroke-width="1.0" fill="none" />
<path d="M639.7 409.0 L690.5 409.0" stroke="#22c42c" stroke-width="0.9" fill="none" />
<circle cx="674.1" cy="393.5" r="2.6" stroke="#c4c6cc" stroke-width="0.9" fill="none"/>
<circle cx="674.1" cy="393.5" r="1.1" stroke="#8a2a3a" stroke-width="0.9" fill="none"/>
<circle cx="707.9" cy="393.5" r="2.6" stroke="#c4c6cc" stroke-width="0.9" fill="none"/>
<circle cx="707.9" cy="393.5" r="1.1" stroke="#8a2a3a" stroke-width="0.9" fill="none"/>
<circle cx="674.1" cy="426.3" r="2.6" stroke="#c4c6cc" stroke-width="0.9" fill="none"/>
<circle cx="674.1" cy="426.3" r="1.1" stroke="#8a2a3a" stroke-width="0.9" fill="none"/>
<circle cx="707.9" cy="426.3" r="2.6" stroke="#c4c6cc" stroke-width="0.9" fill="none"/>
<circle cx="707.9" cy="426.3" r="1.1" stroke="#8a2a3a" stroke-width="0.9" fill="none"/>
<path d="M652.8 377.1 L674.1 393.5" stroke="#22c42c" stroke-width="1.0" fill="none" />
<path d="M641.3 406.6 Q638 388 652.8 377.1" stroke="#22c42c" stroke-width="1" fill="none"/>
<path d="M641.3 406.6 L639.5 401.1 L643.1 401.1Z" fill="#22c42c"/>
<path d="M652.8 377.1 L649.1 381.5 L647.2 378.5Z" fill="#22c42c"/>
<text transform="translate(646.5 396.0) rotate(-62) scale(0.5008928571428571 1)" font-size="8.96" fill="#c2c244" text-anchor="start" >45&#176;</text>
<rect x="706.0" y="363.0" width="17.3" height="10.8" stroke="#22c42c" stroke-width="1.0" fill="none"/>
<text transform="translate(707.5 371.8) scale(0.5008928571428571 1)" font-size="8.4" fill="#c2c244" text-anchor="start" >&#981;130</text>
<path d="M706.0 374.8 L682.3 431.2" stroke="#22c42c" stroke-width="1.0" fill="none" />
<path d="M682.3 431.2 L682.7 425.4 L686.0 426.8Z" fill="#22c42c"/>
<path d="M744.0 374.8 L728.3 374.8 L708.6 393.5" stroke="#22c42c" stroke-width="1.0" fill="none" />
<path d="M708.6 393.5 L711.2 388.3 L713.8 390.9Z" fill="#22c42c"/>
<text transform="translate(733.0 372.5) scale(0.45535714285714285 1)" font-size="8.96" fill="#c2c244" text-anchor="start" >4&#215;M</text>
<circle cx="304.8" cy="410.4" r="30.6" fill="url(#hatch)" stroke="#d4bcc8" stroke-width="1.1"/>
<rect x="331.0" y="401.8" width="5.0" height="16.2" stroke="#212830" stroke-width="0" fill="#212830"/>
<path d="M336.0 401.8 L331.0 401.8 L331.0 418.0 L336.0 418.0" stroke="#c4c6cc" stroke-width="1.0" fill="none" />
<path d="M265.5 410.4 L344.0 410.4" stroke="#3fa2ac" stroke-width="1.1" fill="none" />
<path d="M304.8 394.0 L304.8 449.1" stroke="#3fa2ac" stroke-width="1.1" fill="none" />
<path d="M252.6 394.0 L252.6 440.5" stroke="#22c42c" stroke-width="1.0" fill="none" />
<path d="M252.6 440.5 L250.8 435.0 L254.4 435.0Z" fill="#22c42c"/>
<path d="M252.6 440.5 L304.8 440.5" stroke="#22c42c" stroke-width="1.0" fill="none" />
<text transform="translate(249.7 420.8) rotate(-90) scale(0.44017857142857136 1)" font-size="10.416000000000002" fill="#c2c244" text-anchor="start" >152-0.1</text>
<text transform="translate(241.8 410.0) rotate(-90) scale(0.4705357142857142 1)" font-size="6.720000000000001" fill="#c2c244" text-anchor="start" >0</text>
<path d="M274.7 410.0 L274.7 483.5" stroke="#22c42c" stroke-width="1.0" fill="none" />
<path d="M331.0 418.0 L331.0 483.5" stroke="#22c42c" stroke-width="1.0" fill="none" />
<path d="M274.7 482.9 L331.0 482.9" stroke="#22c42c" stroke-width="1.0" fill="none" />
<path d="M274.7 482.9 L280.2 481.1 L280.2 484.7Z" fill="#22c42c"/>
<path d="M331.0 482.9 L325.5 484.7 L325.5 481.1Z" fill="#22c42c"/>
<text transform="translate(292.4 480.5) scale(0.45535714285714285 1)" font-size="10.080000000000002" fill="#c2c244" text-anchor="start" >152-0.1</text>
<text transform="translate(304.5 472.3) scale(0.4705357142857142 1)" font-size="6.720000000000001" fill="#c2c244" text-anchor="start" >0</text>
<path d="M336.0 401.8 L356.9 401.8" stroke="#22c42c" stroke-width="1.0" fill="none" />
<path d="M336.0 418.0 L356.9 418.0" stroke="#22c42c" stroke-width="1.0" fill="none" />
<path d="M356.9 394.3 L356.9 454.5" stroke="#22c42c" stroke-width="1.0" fill="none" />
<path d="M356.9 401.8 L355.1 396.3 L358.7 396.3Z" fill="#22c42c"/>
<path d="M356.9 418.0 L358.7 423.5 L355.1 423.5Z" fill="#22c42c"/>
<text transform="translate(353.5 452.8) rotate(-90) scale(0.45535714285714285 1)" font-size="9.856000000000002" fill="#c2c244" text-anchor="start" >40-0.062</text>
<text transform="translate(345.5 441.0) rotate(-90) scale(0.4705357142857142 1)" font-size="6.720000000000001" fill="#c2c244" text-anchor="start" >0</text>
<path d="M356.9 410.4 L366.6 405.0 L366.6 415.8 L356.9 410.4" stroke="#c2c244" stroke-width="1.0" fill="none" />
<path d="M359.0 411.5 L379.5 423.3 L379.5 444.8" stroke="#c2c244" stroke-width="1.0" fill="none" />
<text transform="translate(368.5 425.8) rotate(90) scale(0.6071428571428571 1)" font-size="8.4" fill="#c2c244" text-anchor="start" >Ra 3.2</text>
<path d="M331.0 463.1 L348.3 482.5 L383.8 482.5" stroke="#22c42c" stroke-width="1.0" fill="none" />
<path d="M331.0 463.1 L335.9 466.1 L333.2 468.4Z" fill="#22c42c"/>
<path d="M342.9 471.7 L355.8 471.7" stroke="#c2c244" stroke-width="1.1" fill="none" />
<path d="M342.9 471.7 L348.3 482.5 L362.3 459.2 L383.8 459.2" stroke="#c2c244" stroke-width="1.1" fill="none" />
<text transform="translate(364.4 469.6) scale(0.6450892857142856 1)" font-size="8.736" fill="#c2c244" text-anchor="start" >Ra 6.3</text>
<rect x="363.3" y="394.3" width="36.7" height="5.4" stroke="#c2c244" stroke-width="1.0" fill="none"/>
<circle cx="486.2" cy="411" r="35.2" fill="url(#hatch)" stroke="#d4bcc8" stroke-width="1.1"/>
<rect x="513.1" y="401.8" width="9.9" height="16.2" stroke="#212830" stroke-width="0" fill="#212830"/>
<path d="M523.0 401.8 L513.1 401.8 L513.1 418.0 L523.0 418.0" stroke="#c4c6cc" stroke-width="1.0" fill="none" />
<path d="M450.8 409.8 L523.9 409.8" stroke="#3fa2ac" stroke-width="1.1" fill="none" />
<path d="M486.9 394.0 L486.9 447.0" stroke="#3fa2ac" stroke-width="1.1" fill="none" />
<path d="M450.8 410.0 L450.8 483.5" stroke="#22c42c" stroke-width="1.0" fill="none" />
<path d="M513.1 418.0 L513.1 483.5" stroke="#22c42c" stroke-width="1.0" fill="none" />
<path d="M450.8 482.9 L513.1 482.9" stroke="#22c42c" stroke-width="1.0" fill="none" />
<path d="M450.8 482.9 L456.3 481.1 L456.3 484.7Z" fill="#22c42c"/>
<path d="M513.1 482.9 L507.6 484.7 L507.6 481.1Z" fill="#22c42c"/>
<text transform="translate(472.3 480.5) scale(0.44017857142857136 1)" font-size="10.080000000000002" fill="#c2c244" text-anchor="start" >165-0.3</text>
<text transform="translate(484.5 472.3) scale(0.4705357142857142 1)" font-size="6.720000000000001" fill="#c2c244" text-anchor="start" >0</text>
<path d="M523.0 401.8 L543.2 401.8" stroke="#22c42c" stroke-width="1.0" fill="none" />
<path d="M523.0 418.0 L543.2 418.0" stroke="#22c42c" stroke-width="1.0" fill="none" />
<path d="M543.2 394.3 L543.2 454.5" stroke="#22c42c" stroke-width="1.0" fill="none" />
<path d="M543.2 401.8 L541.4 396.3 L545.0 396.3Z" fill="#22c42c"/>
<path d="M543.2 418.0 L545.0 423.5 L541.4 423.5Z" fill="#22c42c"/>
<text transform="translate(535.7 452.4) rotate(-90) scale(0.45535714285714285 1)" font-size="9.856000000000002" fill="#c2c244" text-anchor="start" >45-0.062</text>
<text transform="translate(527.8 441.0) rotate(-90) scale(0.4705357142857142 1)" font-size="6.720000000000001" fill="#c2c244" text-anchor="start" >0</text>
<path d="M543.2 410.4 L552.9 405.0 L552.9 415.8 L543.2 410.4" stroke="#c2c244" stroke-width="1.0" fill="none" />
<path d="M546.0 412.0 L565.8 423.3 L565.8 443.8" stroke="#c2c244" stroke-width="1.0" fill="none" />
<text transform="translate(556.5 425.8) rotate(90) scale(0.6071428571428571 1)" font-size="8.4" fill="#c2c244" text-anchor="start" >Ra 3.2</text>
<path d="M514.2 462.0 L539.0 482.5 L574.4 482.5" stroke="#22c42c" stroke-width="1.0" fill="none" />
<path d="M514.2 462.0 L519.5 464.2 L517.2 466.9Z" fill="#22c42c"/>
<path d="M533.5 472.8 L545.4 472.8" stroke="#c2c244" stroke-width="1.1" fill="none" />
<path d="M533.5 472.8 L539.0 482.5 L552.9 459.9 L573.3 459.9" stroke="#c2c244" stroke-width="1.1" fill="none" />
<text transform="translate(554.0 469.6) scale(0.6450892857142856 1)" font-size="8.736" fill="#c2c244" text-anchor="start" >Ra 6.3</text>
<rect x="0" y="484.5" width="744" height="3.5" fill="#2b3039"/>
</svg>
<div class="a" style="left:174.6px;top:128.5px;width:408.0px;height:265.5px;background:#f0f0f0;border:1px solid #fafafa;box-shadow:0 1px 1px #14171c;"></div>
<div class="a" style="left:175.5px;top:129.5px;width:406.29999999999995px;height:16.5px;background:#ffffff;"></div>
<svg class="a" style="left:179.4px;top:132.3px" width="9" height="9.2" viewBox="0 0 9 9.2"><rect x="0.4" y="0.4" width="8.2" height="8.4" fill="#3434d4" stroke="#8080e8" stroke-width="0.8"/><path d="M1.8 7.6 L4.2 1.8 L4.6 7.6 M2.8 5.4 H4.5 M7.6 4.6 Q6 4 5.6 5.6 Q5.3 7.4 7.2 7.2" stroke="#fff" stroke-width="0.9" fill="none"/></svg>
<div class="a t" style="left:191px;top:134.30px;font-size:7.5px;line-height:7.5px;-webkit-text-stroke:0.2px #111">Surface texture Main frame ISO</div>
<svg class="a" style="left:569px;top:133.5px" width="8" height="8" viewBox="0 0 8 8"><path d="M0.8 0.8 L7.2 7.2 M7.2 0.8 L0.8 7.2" stroke="#222" stroke-width="0.9"/></svg>
<div class="a" style="left:180px;top:162.5px;width:396px;height:210.0px;border:1px solid #e3e3e3;border-bottom:1px solid #9a9a9a;border-right:1px solid #a8a8a8;background:#f0f0f0;"></div>
<div class="a" style="left:181.4px;top:152.4px;width:26.599999999999994px;height:10.799999999999983px;background:#ffffff;"></div>
<div class="a" style="left:208px;top:155px;width:23.30000000000001px;height:7.800000000000011px;background:#f5f5f5;border:1px solid #e6e6e6;border-bottom:none;"></div>
<div class="a t" style="left:185.3px;top:153.53px;font-size:6.6px;line-height:6.6px;">Type</div>
<div class="a t" style="left:209.8px;top:155.20px;font-size:6.3px;line-height:6.3px;">Leader</div>
<svg class="a" style="left:189.4px;top:170.6px" width="98.3" height="76.2" viewBox="189.4 170.6 98.3 76.2"><rect x="189.4" y="170.6" width="98.3" height="76.2" fill="#000"/>
<path d="M193.7 212.4 L219.8 212.4 M193.7 212.4 L207.3 235.5 L238.3 183" stroke="#a9a92a" stroke-width="1.2" fill="none"/>
<path d="M238 183.1 L283.4 183.1" stroke="#a9a92a" stroke-width="1.7" fill="none"/>
<g stroke="#a9a92a" stroke-width="1.25" fill="none" stroke-linejoin="round">
<path d="M242.3 201.8 V187.6 H246.6 Q250.3 187.6 250.3 191.3 Q250.3 195 246.6 195 H242.3 M246.8 195 L250.6 201.8"/>
<path d="M254.4 193 Q255.8 192.2 257.6 192.2 Q260.6 192.2 260.6 194.8 V201.8 M260.6 196.8 H257.2 Q254.2 196.8 254.2 199.3 Q254.2 201.6 257 201.6 Q260.4 201.6 260.6 199"/>
<path d="M264.5 190.2 L268.2 187.5 V201.8"/>
<path d="M283.3 188.6 Q281.8 187.6 280.4 188.4 Q279.4 189 278.2 192 Q277.3 194.5 277.3 197.2 Q277.3 201.6 280.8 201.6 Q284.2 201.6 284.2 197.6 Q284.2 193.8 280.8 193.8 Q278.3 193.8 277.5 195.8"/>
</g>
<rect x="271.6" y="200.4" width="1.5" height="1.5" fill="#a9a92a"/>
</svg>
<div class="a" style="left:293.6px;top:175.4px;width:71.39999999999998px;height:33.19999999999999px;border:1px solid #e9e9e9;"></div>
<div class="a t" style="left:295.9px;top:171.53px;font-size:6.6px;line-height:6.6px;color:#3c3c3c;background:#f0f0f0;padding-right:1px">Basic symbol</div>
<div class="a" style="left:294.1px;top:185.7px;width:20.899999999999977px;height:18.30000000000001px;background:#e1e1e1;border:1px solid #d9d9d9;"></div>
<div class="a" style="left:317.2px;top:185.7px;width:20.400000000000034px;height:18.30000000000001px;background:#e1e1e1;border:1px solid #d9d9d9;"></div>
<div class="a" style="left:339.3px;top:185.7px;width:21.399999999999977px;height:18.600000000000023px;background:#cce4f7;border:1px solid #7096c0;"></div>
<svg class="a" style="left:298px;top:189.2px" width="14" height="12" viewBox="0 0 14 12"><path d="M4 6 L7 10.8 L11.5 0.8" stroke="#222" stroke-width="0.8" fill="none"/></svg>
<svg class="a" style="left:320.3px;top:189.2px" width="14" height="12" viewBox="0 0 14 12"><path d="M4 6.4 L7.6 6.4 L6.6 10.5 Z M6.6 10.5 L11.3 1.2" stroke="#111" stroke-width="0.95" fill="none"/></svg>
<svg class="a" style="left:343px;top:189.2px" width="14" height="12" viewBox="0 0 14 12"><path d="M4.2 7 L8.4 7 L6.5 10.8 Z M6.5 10.8 L11.5 1" stroke="#222" stroke-width="0.85" fill="none"/></svg>
<div class="a" style="left:365px;top:175.4px;width:93.80000000000001px;height:34.900000000000006px;border:1px solid #e9e9e9;"></div>
<div class="a t" style="left:369.2px;top:171.13px;font-size:6.6px;line-height:6.6px;color:#3c3c3c;background:#f0f0f0;padding-right:1px">Other</div>
<div class="a" style="left:367.4px;top:186.3px;width:21.0px;height:17.799999999999983px;background:#e1e1e1;border:1px solid #d9d9d9;"></div>
<div class="a" style="left:390.3px;top:186.3px;width:21.19999999999999px;height:17.799999999999983px;background:#e1e1e1;border:1px solid #d9d9d9;"></div>
<div class="a" style="left:413.5px;top:186.3px;width:21.19999999999999px;height:17.799999999999983px;background:#e1e1e1;border:1px solid #d9d9d9;"></div>
<svg class="a" style="left:367.4px;top:186.3px" width="68" height="18" viewBox="0 0 68 18"><path d="M5 13 L10.5 8.6 L15.5 8.6" stroke="#333" stroke-width="0.85" fill="none"/><path d="M27.5 13.5 L32.8 9 M34.8 8.8 L39.5 8.8" stroke="#333" stroke-width="0.85" fill="none"/><circle cx="33.8" cy="8.8" r="1.3" stroke="#333" stroke-width="0.8" fill="none"/><path d="M50.3 4.5 Q47 9.5 50.3 14.5 M60.5 4.5 Q63.8 9.5 60.5 14.5 M52 9.5 L54.5 13.5 L58.5 5" stroke="#333" stroke-width="0.85" fill="none"/></svg>
<div class="a" style="left:293.6px;top:215.9px;width:165.7px;height:32.69999999999999px;border:1px solid #e9e9e9;"></div>
<div class="a t" style="left:296.1px;top:216.32px;font-size:6.5px;line-height:6.5px;color:#3c3c3c;background:#f0f0f0;padding-right:1px">Direction of texture</div>
<div class="a" style="left:295.3px;top:228.1px;width:15.0px;height:14.900000000000006px;background:#cce4f7;border:1px solid #7096c0;color:#333"></div>
<div class="a" style="left:312.7px;top:228.1px;width:15.0px;height:14.900000000000006px;background:#e1e1e1;border:1px solid #d9d9d9;color:#333"></div>
<div class="a" style="left:330.1px;top:228.1px;width:15.0px;height:14.900000000000006px;background:#e1e1e1;border:1px solid #d9d9d9;color:#333"></div>
<div class="a" style="left:347.5px;top:228.1px;width:15.0px;height:14.900000000000006px;background:#e1e1e1;border:1px solid #d9d9d9;color:#333"></div>
<div class="a" style="left:364.9px;top:228.1px;width:15.0px;height:14.900000000000006px;background:#e1e1e1;border:1px solid #d9d9d9;color:#333"></div>
<div class="a t" style="left:364.9px;top:228.1px;width:15.0px;height:14.900000000000006px;font-size:7.4px;line-height:14.900000000000006px;text-align:center">M</div>
<div class="a" style="left:382.3px;top:228.1px;width:15.0px;height:14.900000000000006px;background:#e1e1e1;border:1px solid #d9d9d9;color:#333"></div>
<div class="a t" style="left:382.3px;top:228.1px;width:15.0px;height:14.900000000000006px;font-size:7.4px;line-height:14.900000000000006px;text-align:center">C</div>
<div class="a" style="left:399.7px;top:228.1px;width:15.0px;height:14.900000000000006px;background:#e1e1e1;border:1px solid #d9d9d9;color:#333"></div>
<div class="a t" style="left:399.7px;top:228.1px;width:15.0px;height:14.900000000000006px;font-size:7.4px;line-height:14.900000000000006px;text-align:center">R</div>
<div class="a" style="left:417.1px;top:228.1px;width:15.0px;height:14.900000000000006px;background:#e1e1e1;border:1px solid #d9d9d9;color:#333"></div>
<div class="a t" style="left:417.1px;top:228.1px;width:15.0px;height:14.900000000000006px;font-size:7.4px;line-height:14.900000000000006px;text-align:center">P</div>
<svg class="a" style="left:295.3px;top:228.1px" width="140" height="15" viewBox="0 0 140 15"><g stroke="#444" stroke-width="0.9" fill="none"><path d="M21.5 6 H29.5 M21.5 9 H29.5"/><path d="M42.4 4 V10.5 M38.4 10.5 H46.4"/><path d="M56.5 4.5 L62 10 M62 4.5 L56.5 10"/></g></svg>
<div class="a" style="left:190px;top:253px;width:269.3px;height:106px;border:1px solid #e9e9e9;"></div>
<div class="a t" style="left:193.2px;top:258.34px;font-size:6.8px;line-height:6.8px;">Insert</div>
<div class="a" style="left:235.4px;top:254.5px;width:30.099999999999994px;height:12.699999999999989px;background:#e8e8e8;border:1px solid #cdcdcd;"></div>
<div class="a" style="left:265.5px;top:254.5px;width:7.0px;height:12.699999999999989px;background:#f4f4f4;border:1px solid #cdcdcd;border-left:none;"></div>
<svg class="a" style="left:245px;top:255px" width="14" height="12" viewBox="245 255 14 12"><ellipse cx="251.7" cy="261.2" rx="2.4" ry="3.6" stroke="#111" stroke-width="0.8" fill="none"/><path d="M249.3 264.6 L254.2 257.7" stroke="#111" stroke-width="0.8"/></svg>
<div class="a" style="left:268.1px;top:260.6px;width:1.5px;height:1.3999999999999773px;background:#222;"></div>
<div class="a t" style="left:351.1px;top:272.14px;font-size:6.8px;line-height:6.8px;">B'</div>
<div class="a" style="left:361.2px;top:268.7px;width:73.10000000000002px;height:10.699999999999989px;background:#fff;border:1px solid #acacac;"></div>
<svg class="a" style="left:425.3px;top:272.54999999999995px" width="6" height="4" viewBox="0 0 6 4"><path d="M0.6 0.8 L3 3.1 L5.4 0.8" stroke="#444" stroke-width="0.8" fill="none"/></svg>
<div class="a t" style="left:351.5px;top:283.74px;font-size:6.8px;line-height:6.8px;color:#555">B</div>
<div class="a" style="left:361.2px;top:282.2px;width:73.10000000000002px;height:9.800000000000011px;background:#f2f2f2;border:1px solid #dedede;"></div>
<div class="a" style="left:422.3px;top:283.2px;width:1.0px;height:7.800000000000011px;background:#e4e4e4;"></div>
<svg class="a" style="left:425.3px;top:285.6px" width="6" height="4" viewBox="0 0 6 4"><path d="M0.6 0.8 L3 3.1 L5.4 0.8" stroke="#c8c8c8" stroke-width="0.8" fill="none"/></svg>
<div class="a t" style="left:193px;top:301.94px;font-size:6.8px;line-height:6.8px;">A'</div>
<div class="a" style="left:201.1px;top:298.9px;width:92.29999999999998px;height:11.300000000000011px;background:#fff;border:1px solid #acacac;"></div>
<svg class="a" style="left:284.4px;top:303.04999999999995px" width="6" height="4" viewBox="0 0 6 4"><path d="M0.6 0.8 L3 3.1 L5.4 0.8" stroke="#444" stroke-width="0.8" fill="none"/></svg>
<div class="a t" style="left:193.5px;top:316.54px;font-size:6.8px;line-height:6.8px;color:#666">A</div>
<div class="a" style="left:201.1px;top:313.4px;width:92.29999999999998px;height:10.800000000000011px;background:#f2f2f2;border:1px solid #dedede;"></div>
<div class="a" style="left:281.4px;top:314.4px;width:1.0px;height:8.800000000000011px;background:#e4e4e4;"></div>
<svg class="a" style="left:284.4px;top:317.29999999999995px" width="6" height="4" viewBox="0 0 6 4"><path d="M0.6 0.8 L3 3.1 L5.4 0.8" stroke="#c8c8c8" stroke-width="0.8" fill="none"/></svg>
<div class="a t" style="left:192.5px;top:332.54px;font-size:6.8px;line-height:6.8px;color:#444">E</div>
<div class="a" style="left:201.1px;top:328.2px;width:36.30000000000001px;height:11.5px;background:#fff;border:1px solid #acacac;"></div>
<svg class="a" style="left:228.4px;top:332.45px" width="6" height="4" viewBox="0 0 6 4"><path d="M0.6 0.8 L3 3.1 L5.4 0.8" stroke="#444" stroke-width="0.8" fill="none"/></svg>
<div class="a" style="left:240.2px;top:328.2px;width:36.400000000000034px;height:11.5px;background:#fff;border:1px solid #acacac;"></div>
<svg class="a" style="left:267.6px;top:332.45px" width="6" height="4" viewBox="0 0 6 4"><path d="M0.6 0.8 L3 3.1 L5.4 0.8" stroke="#444" stroke-width="0.8" fill="none"/></svg>
<div class="a t" style="left:308.1px;top:317.24px;font-size:6.8px;line-height:6.8px;color:#666">F</div>
<div class="a" style="left:315px;top:315.5px;width:52.10000000000002px;height:10.100000000000023px;background:#f2f2f2;border:1px solid #dedede;"></div>
<div class="a" style="left:355.1px;top:316.5px;width:1.0px;height:8.100000000000023px;background:#e4e4e4;"></div>
<svg class="a" style="left:358.1px;top:319.05px" width="6" height="4" viewBox="0 0 6 4"><path d="M0.6 0.8 L3 3.1 L5.4 0.8" stroke="#c8c8c8" stroke-width="0.8" fill="none"/></svg>
<div class="a t" style="left:369.4px;top:303.14px;font-size:6.8px;line-height:6.8px;">C</div>
<div class="a" style="left:381.3px;top:300.4px;width:53.0px;height:10.300000000000011px;background:#fff;border:1px solid #acacac;"></div>
<svg class="a" style="left:425.3px;top:304.04999999999995px" width="6" height="4" viewBox="0 0 6 4"><path d="M0.6 0.8 L3 3.1 L5.4 0.8" stroke="#444" stroke-width="0.8" fill="none"/></svg>
<div class="a t" style="left:383.3px;top:301.96px;font-size:6.4px;line-height:6.4px;">Ra1.6</div>
<div class="a t" style="left:369.4px;top:319.14px;font-size:6.8px;line-height:6.8px;">C'</div>
<div class="a" style="left:381.3px;top:315.3px;width:53.0px;height:10.300000000000011px;background:#fff;border:1px solid #acacac;"></div>
<svg class="a" style="left:425.3px;top:318.95000000000005px" width="6" height="4" viewBox="0 0 6 4"><path d="M0.6 0.8 L3 3.1 L5.4 0.8" stroke="#444" stroke-width="0.8" fill="none"/></svg>
<div class="a t" style="left:369.4px;top:332.74px;font-size:6.8px;line-height:6.8px;color:#555">G</div>
<div class="a" style="left:381.3px;top:330.4px;width:53.0px;height:10.0px;background:#f2f2f2;border:1px solid #dedede;"></div>
<div class="a" style="left:422.3px;top:331.4px;width:1.0px;height:8.0px;background:#e4e4e4;"></div>
<svg class="a" style="left:425.3px;top:333.9px" width="6" height="4" viewBox="0 0 6 4"><path d="M0.6 0.8 L3 3.1 L5.4 0.8" stroke="#c8c8c8" stroke-width="0.8" fill="none"/></svg>
<svg class="a" style="left:280px;top:294px" width="158" height="52" viewBox="280 294 158 52"><path d="M283 330.4 L295.6 341.8 L315 296.6 L434.3 296.6" stroke="#1a1a1a" stroke-width="1.6" fill="none"/></svg>
<div class="a" style="left:463.5px;top:174.5px;width:112.5px;height:184.5px;border:1px solid #e9e9e9;border-right:none;"></div>
<div class="a t" style="left:467.7px;top:171.10px;font-size:6.2px;line-height:6.2px;color:#3c3c3c;background:#f0f0f0;padding-right:1px">List of templates</div>
<div class="a" style="left:469.2px;top:180px;width:105.59999999999997px;height:160.5px;background:#fff;border:1px solid #d4d4d4;"></div>
<svg class="a" style="left:481.3px;top:181.8px" width="40.5" height="25.7" viewBox="481.3 181.8 40.5 25.7"><rect x="481.3" y="181.8" width="40.5" height="25.7" fill="#000"/>
<path d="M483 196.1 L493.8 196.1 M483 196.1 L488.4 205.6 L501.2 184.4 L520.3 184.4" stroke="#a8a82a" stroke-width="0.9" fill="none"/>
<text transform="translate(502.3 192.3) scale(0.84 1)" font-family="Liberation Sans" font-weight="bold" font-size="8" fill="#c0c03a">Ra1.6</text></svg>
<div class="a t" style="left:523px;top:190.00px;font-size:6.3px;line-height:6.3px;">Template1</div>
<div class="a" style="left:469.6px;top:343.6px;width:104.89999999999998px;height:10.899999999999977px;background:#e1e1e1;border:1px solid #d9d9d9;background:#e1e1e1;border:1px solid #d2d2d2;"></div>
<div class="a t" style="left:469.6px;top:343.6px;width:104.89999999999998px;height:10.899999999999977px;font-size:6.6px;line-height:10.899999999999977px;text-align:center">Add to template</div>
<div class="a" style="left:182.2px;top:375.2px;width:45.30000000000001px;height:12.100000000000023px;background:#e1e1e1;border:1px solid #d9d9d9;border:1px solid #d0d0d0;"></div>
<div class="a t" style="left:182.2px;top:375.2px;width:45.30000000000001px;height:12.100000000000023px;font-size:6.4px;line-height:12.100000000000023px;text-align:center">Setting...</div>
<div class="a" style="left:232.2px;top:375.2px;width:45.30000000000001px;height:12.100000000000023px;background:#e1e1e1;border:1px solid #d9d9d9;border:1px solid #d0d0d0;"></div>
<div class="a t" style="left:232.2px;top:375.2px;width:45.30000000000001px;height:12.100000000000023px;font-size:6.6px;line-height:12.100000000000023px;text-align:center">Clear</div>
<div class="a" style="left:473.1px;top:375.4px;width:44.89999999999998px;height:11.400000000000034px;background:#e1e1e1;border:1.5px solid #3c8ad0;"></div>
<div class="a t" style="left:473.1px;top:375.4px;width:44.9px;height:11.4px;font-size:6.6px;line-height:11.4px;text-align:center">OK</div>
<div class="a" style="left:530.3px;top:375.8px;width:45.10000000000002px;height:11.0px;background:#e1e1e1;border:1px solid #d9d9d9;border:1px solid #d0d0d0;"></div>
<div class="a t" style="left:530.3px;top:375.8px;width:45.10000000000002px;height:11.0px;font-size:6.6px;line-height:11.0px;text-align:center">Cancel</div>
</body></html>
